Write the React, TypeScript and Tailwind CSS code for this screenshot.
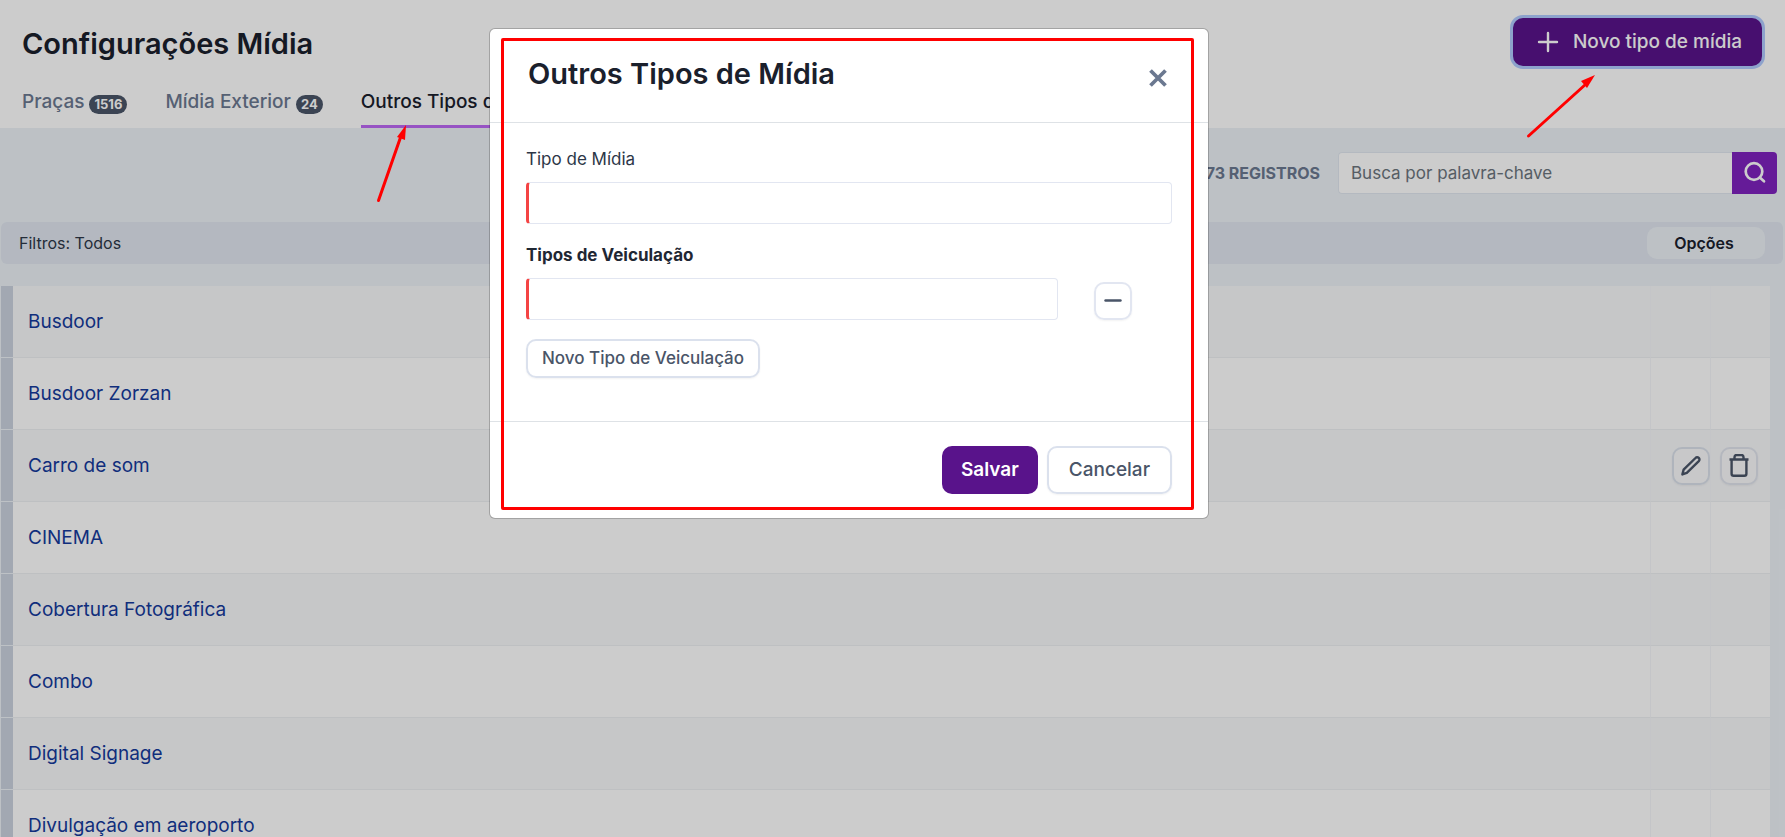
import { useState } from 'react';

interface Tab {
  label: string;
  count?: number;
  active?: boolean;
}

const tabs: Tab[] = [
  { label: 'Praças', count: 1516 },
  { label: 'Mídia Exterior', count: 24 },
  { label: 'Outros Tipos de Mídia', active: true },
];

const mediaTypes = [
  { id: 1, name: 'Busdoor' },
  { id: 2, name: 'Busdoor Zorzan' },
  { id: 3, name: 'Carro de som', showActions: true },
  { id: 4, name: 'CINEMA' },
  { id: 5, name: 'Cobertura Fotográfica' },
  { id: 6, name: 'Combo' },
  { id: 7, name: 'Digital Signage' },
  { id: 8, name: 'Divulgação em aeroporto' },
];

function PlusIcon() {
  return (
    <svg className="h-[22px] w-[22px]" viewBox="0 0 22 22" fill="none" stroke="currentColor" strokeWidth="2.4" strokeLinecap="round" aria-hidden="true">
      <path d="M11 2v18M2 11h18" />
    </svg>
  );
}

function MinusIcon() {
  return (
    <svg className="h-5 w-5" viewBox="0 0 20 20" fill="none" stroke="currentColor" strokeWidth="2.4" strokeLinecap="round" aria-hidden="true">
      <path d="M2.500 9.500h15" />
    </svg>
  );
}

function SearchIcon() {
  return (
    <svg className="h-6 w-6" viewBox="0 0 24 24" fill="none" stroke="currentColor" strokeWidth="2.7" aria-hidden="true">
      <circle cx="11" cy="10.5" r="8.3" />
      <path d="M16.800 16.500l4.200 3.800" strokeLinecap="round" />
    </svg>
  );
}

function PencilIcon() {
  return (
    <svg className="h-5 w-5" viewBox="0 0 20 20" fill="none" stroke="currentColor" strokeWidth="2.4" strokeLinejoin="round" aria-hidden="true">
      <path d="M1.400 18.400l1.200-4.700L14.500 2a2.200 2.200 0 0 1 3.300 3.200L5.800 16.900z" />
    </svg>
  );
}

function TrashIcon() {
  return (
    <svg className="h-6 w-6" viewBox="0 0 24 24" fill="none" stroke="currentColor" strokeWidth="2.4" strokeLinejoin="round" aria-hidden="true">
      <path d="M2.500 5.500h19M4.600 5.500v14.200a2 2 0 0 0 2 2h10.800a2 2 0 0 0 2-2V5.500M7.500 5.500V3a2.200 2.200 0 0 1 2.200-2h4.600a2.200 2.200 0 0 1 2.200 2v2.500" />
    </svg>
  );
}

function MediaTypeModal({ onClose }: { onClose: () => void }) {
  return (
    <div className="absolute inset-0 flex items-start justify-center bg-black/20 pt-7 pr-[87px]">
      <div role="dialog" aria-labelledby="modal-title" className="relative w-[720px] rounded-md border border-black/20 bg-white bg-clip-padding">
        <div className="flex h-[94px] items-start justify-between border-b border-[#dee2e6] pt-[25px] pr-9 pl-[38px]">
          <h2 id="modal-title" className="text-[29px] leading-10 font-semibold text-[#1a202c]">
            Outros Tipos de Mídia
          </h2>
          <button type="button" onClick={onClose} aria-label="Fechar" className="flex h-12 w-7 items-center justify-center text-[#6b7890]">
            <svg className="h-[18px] w-[18px]" viewBox="0 0 18 18" fill="none" stroke="currentColor" strokeWidth="3.8" aria-hidden="true">
              <path d="M1.500 1.500l15 15M16.500 1.500l-15 15" />
            </svg>
          </button>
        </div>

        <div className="h-[298px] px-9 pt-6 text-[17px] text-[#2d3748]">
          <label htmlFor="media-type" className="block leading-6">Tipo de Mídia</label>
          <input
            id="media-type"
            type="text"
            className="mt-[11px] block h-[42px] w-full rounded border border-l-[3px] border-[#e2e6f1] border-l-[#f44444] px-3 outline-none"
          />
          <label htmlFor="placement-type" className="mt-[19px] block leading-6 font-bold text-[#1f2733]">Tipos de Veiculação</label>
          <div className="mt-[11px] flex items-center">
            <input
              id="placement-type"
              type="text"
              className="h-[42px] flex-1 rounded border border-l-[3px] border-[#e2e6f1] border-l-[#f44444] px-3 outline-none"
            />
            <button type="button" aria-label="Remover" className="mt-1 mr-10 ml-9 flex h-[38px] w-[38px] items-center justify-center rounded-[10px] border-2 border-[#e2e6f1] text-[#4a5568] shadow-xs">
              <MinusIcon />
            </button>
          </div>
          <button type="button" className="mt-[19px] h-[39px] rounded-[10px] border-2 border-[#dbe1ed] px-[14px] font-medium text-[#4a5568] shadow-xs">
            Novo Tipo de Veiculação
          </button>
        </div>

        <div className="flex h-[97px] items-start justify-end gap-[9px] border-t border-[#dee2e6] px-9 pt-6">
          <button type="button" className="h-12 rounded-[10px] bg-[#59138b] px-[19px] pt-px text-[19px] font-semibold text-white">
            Salvar
          </button>
          <button type="button" onClick={onClose} className="h-12 rounded-[10px] border-2 border-[#dbe1ed] px-5 pt-px text-[19px] font-medium text-[#4a5568] shadow-xs">
            Cancelar
          </button>
        </div>

        {/* Highlight frame */}
        <div className="pointer-events-none absolute top-[9px] right-[14px] bottom-2 left-[11px] rounded-xs border-[3px] border-[#ff0000]" />
      </div>
    </div>
  );
}

export default function App() {
  const [modalOpen, setModalOpen] = useState(true);

  return (
    <div className="relative h-screen overflow-hidden bg-[#edf2f7] font-['Inter',sans-serif] text-[#1a202c]">
      {/* Header */}
      <header className="h-32 bg-white pr-[23px] pl-[22px]">
        <div className="flex h-[78px] items-start justify-between">
          <h1 className="pt-6 text-[29px] leading-10 font-semibold">Configurações Mídia</h1>
          <button
            type="button"
            onClick={() => setModalOpen(true)}
            className="mt-[18px] flex h-12 items-center gap-[14px] rounded-[10px] bg-[#59138b] pr-5 pl-6 text-[19px] font-medium text-white ring-3 ring-[#b1cbff]"
          >
            <PlusIcon />
            <span className="pt-px">Novo tipo de mídia</span>
          </button>
        </div>
        <nav className="flex h-[50px] gap-[38px] text-[19px] leading-7 font-medium">
          {tabs.map((tab) => (
            <a
              key={tab.label}
              href="#"
              className={
                tab.active
                  ? 'flex items-start rounded-t-sm border-b-3 border-[#bd68f4] pt-[10px] text-[#1a202c]'
                  : 'flex items-start pt-[10px] text-[#6b7890]'
              }
            >
              {tab.label}
              {tab.count !== undefined && (
                <span className="mt-[7px] ml-[5px] rounded-full bg-[#4a5568] px-[5px] text-[13px] leading-[19px] font-bold text-white">
                  {tab.count}
                </span>
              )}
            </a>
          ))}
        </nav>
      </header>

      {/* Search */}
      <div className="flex h-[94px] items-start justify-end pt-6 pr-2">
        <span className="mr-[18px] leading-[42px] font-bold text-[#6b7890]">73 REGISTROS</span>
        <input
          type="text"
          aria-label="Busca por palavra-chave"
          placeholder="Busca por palavra-chave"
          className="h-[42px] w-[394px] rounded-l border border-r-0 border-[#e2e8f0] bg-white px-3 text-[17px] outline-none placeholder:text-[#6c757d]"
        />
        <button type="button" aria-label="Buscar" className="flex h-[42px] w-[45px] items-center justify-center rounded-r bg-[#7f22bf] text-white">
          <SearchIcon />
        </button>
      </div>

      {/* Filters */}
      <div className="mr-[2px] ml-px flex h-[42px] items-center justify-between rounded-md bg-[#e1e7f0] pr-[18px] pl-[18px]">
        <span className="text-[#2d3748]">Filtros: Todos</span>
        <button type="button" className="h-8 w-[118px] rounded-[10px] bg-[#edf2f7] pr-1 font-semibold">
          Opções
        </button>
      </div>

      {/* Media types */}
      <div className="mt-[22px] mr-[15px] ml-px">
        <table className="w-full border-separate border-spacing-0 text-[19px]">
          <tbody>
            {mediaTypes.map((item) => (
              <tr key={item.id} className="h-[72px] odd:bg-[#f8f9fb] even:bg-white">
                <td className="w-3 border-b border-[#edf2f7] bg-[#cbd2df] p-0" />
                <td className="border-b border-[#eef0f3] pt-[2px] pl-[15px] text-[#143a9c]">{item.name}</td>
                <td className="w-[60px] border-b border-l border-b-[#eef0f3] border-l-[#f5f7fa] p-0">
                  {item.showActions && (
                    <button type="button" aria-label="Editar" className="ml-auto flex h-[38px] w-[38px] items-center justify-center rounded-[10px] border-2 border-[#dbe2ec] bg-white/40 text-[#4a5568] shadow-xs">
                      <PencilIcon />
                    </button>
                  )}
                </td>
                <td className="w-[60px] border-b border-l border-b-[#eef0f3] border-l-[#f5f7fa] p-0">
                  {item.showActions && (
                    <button type="button" aria-label="Excluir" className="ml-[9px] flex h-[38px] w-[38px] items-center justify-center rounded-[10px] border-2 border-[#e1e5ee] bg-white/40 text-[#4a5568] shadow-xs">
                      <TrashIcon />
                    </button>
                  )}
                </td>
              </tr>
            ))}
          </tbody>
        </table>
      </div>

      {modalOpen && <MediaTypeModal onClose={() => setModalOpen(false)} />}

      {/* Pointer arrows */}
      <svg className="pointer-events-none absolute top-[120px] left-[370px]" width="44" height="86" viewBox="0 0 44 86" aria-hidden="true">
        <path d="M8.500 80.500L31 16" stroke="#ff0000" strokeWidth="3" strokeLinecap="round" />
        <path d="M36 5L27 17l8 3z" fill="#ff0000" />
      </svg>
      <svg className="pointer-events-none absolute top-[70px] right-[185px]" width="80" height="72" viewBox="0 0 80 72" aria-hidden="true">
        <path d="M8.500 66L66 14" stroke="#ff0000" strokeWidth="3" strokeLinecap="round" />
        <path d="M75 5L61 11l6 7z" fill="#ff0000" />
      </svg>
    </div>
  );
}
